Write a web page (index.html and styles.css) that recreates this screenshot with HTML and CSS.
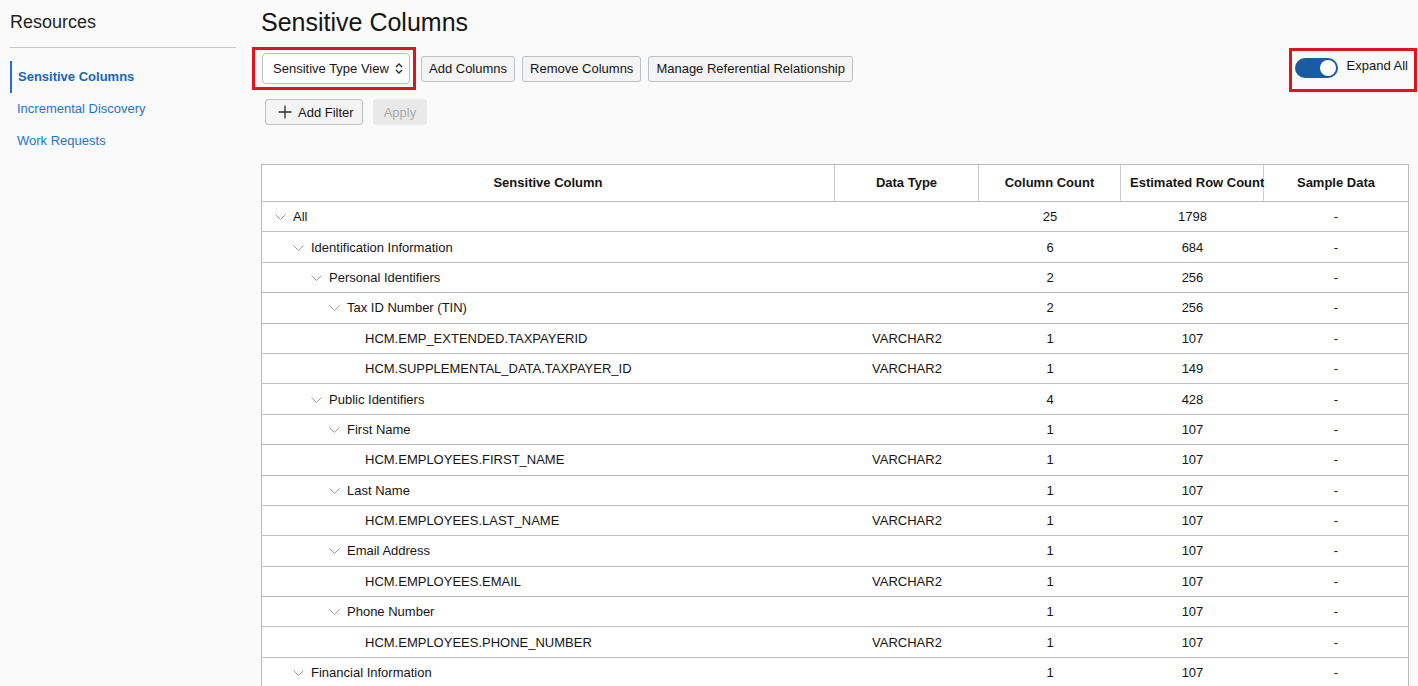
FILE: index.html
```html
<!DOCTYPE html>
<html lang="en">
<head>
<meta charset="utf-8">
<title>Sensitive Columns</title>
<link rel="stylesheet" href="styles.css">
</head>
<body>
<div class="page">
  <aside class="sidebar">
    <h2 class="side-title">Resources</h2>
    <nav class="side-nav">
      <a class="nav-item active">Sensitive Columns</a>
      <a class="nav-item">Incremental Discovery</a>
      <a class="nav-item">Work Requests</a>
    </nav>
  </aside>

  <main class="main">
    <h1 class="title">Sensitive Columns</h1>

    <div class="toolbar">
      <div class="toolbar-left">
        <div class="highlight highlight-select">
          <div class="select">
            <span>Sensitive Type View</span>
            <svg class="select-icon" width="8" height="13" viewBox="0 0 8 13"><path d="M1 5 L4 2 L7 5 M1 8 L4 11 L7 8" fill="none" stroke="#2b2b2b" stroke-width="1.3"/></svg>
          </div>
        </div>
        <button class="btn">Add Columns</button>
        <button class="btn">Remove Columns</button>
        <button class="btn">Manage Referential Relationship</button>
      </div>
      <div class="highlight highlight-toggle">
        <span class="switch"><span class="knob"></span></span>
        <span class="switch-label">Expand All</span>
      </div>
    </div>

    <div class="filter-row">
      <button class="btn btn-filter">
        <svg width="14" height="14" viewBox="0 0 14 14"><path d="M7 0.5 V13.5 M0.5 7 H13.5" stroke="#2b2b2b" stroke-width="1.3" fill="none"/></svg>
        <span>Add Filter</span>
      </button>
      <button class="btn btn-disabled">Apply</button>
    </div>

    <div class="table">
      <div class="thead">
        <div class="th">Sensitive Column</div>
        <div class="th">Data Type</div>
        <div class="th">Column Count</div>
        <div class="th">Estimated Row Count</div>
        <div class="th">Sample Data</div>
      </div>

      <div class="tr"><div class="td tree lvl0"><span class="chev"><svg width="11" height="7" viewBox="0 0 11 7"><path d="M0.5 0.5 L5.5 5.5 L10.5 0.5" fill="none" stroke="#9a9a9a" stroke-width="1"/></svg></span>All</div><div class="td"></div><div class="td">25</div><div class="td">1798</div><div class="td">-</div></div>
      <div class="tr"><div class="td tree lvl1"><span class="chev"><svg width="11" height="7" viewBox="0 0 11 7"><path d="M0.5 0.5 L5.5 5.5 L10.5 0.5" fill="none" stroke="#9a9a9a" stroke-width="1"/></svg></span>Identification Information</div><div class="td"></div><div class="td">6</div><div class="td">684</div><div class="td">-</div></div>
      <div class="tr"><div class="td tree lvl2"><span class="chev"><svg width="11" height="7" viewBox="0 0 11 7"><path d="M0.5 0.5 L5.5 5.5 L10.5 0.5" fill="none" stroke="#9a9a9a" stroke-width="1"/></svg></span>Personal Identifiers</div><div class="td"></div><div class="td">2</div><div class="td">256</div><div class="td">-</div></div>
      <div class="tr"><div class="td tree lvl3"><span class="chev"><svg width="11" height="7" viewBox="0 0 11 7"><path d="M0.5 0.5 L5.5 5.5 L10.5 0.5" fill="none" stroke="#9a9a9a" stroke-width="1"/></svg></span>Tax ID Number (TIN)</div><div class="td"></div><div class="td">2</div><div class="td">256</div><div class="td">-</div></div>
      <div class="tr"><div class="td tree lvl4"><span class="chev"></span>HCM.EMP_EXTENDED.TAXPAYERID</div><div class="td">VARCHAR2</div><div class="td">1</div><div class="td">107</div><div class="td">-</div></div>
      <div class="tr"><div class="td tree lvl4"><span class="chev"></span>HCM.SUPPLEMENTAL_DATA.TAXPAYER_ID</div><div class="td">VARCHAR2</div><div class="td">1</div><div class="td">149</div><div class="td">-</div></div>
      <div class="tr"><div class="td tree lvl2"><span class="chev"><svg width="11" height="7" viewBox="0 0 11 7"><path d="M0.5 0.5 L5.5 5.5 L10.5 0.5" fill="none" stroke="#9a9a9a" stroke-width="1"/></svg></span>Public Identifiers</div><div class="td"></div><div class="td">4</div><div class="td">428</div><div class="td">-</div></div>
      <div class="tr"><div class="td tree lvl3"><span class="chev"><svg width="11" height="7" viewBox="0 0 11 7"><path d="M0.5 0.5 L5.5 5.5 L10.5 0.5" fill="none" stroke="#9a9a9a" stroke-width="1"/></svg></span>First Name</div><div class="td"></div><div class="td">1</div><div class="td">107</div><div class="td">-</div></div>
      <div class="tr"><div class="td tree lvl4"><span class="chev"></span>HCM.EMPLOYEES.FIRST_NAME</div><div class="td">VARCHAR2</div><div class="td">1</div><div class="td">107</div><div class="td">-</div></div>
      <div class="tr"><div class="td tree lvl3"><span class="chev"><svg width="11" height="7" viewBox="0 0 11 7"><path d="M0.5 0.5 L5.5 5.5 L10.5 0.5" fill="none" stroke="#9a9a9a" stroke-width="1"/></svg></span>Last Name</div><div class="td"></div><div class="td">1</div><div class="td">107</div><div class="td">-</div></div>
      <div class="tr"><div class="td tree lvl4"><span class="chev"></span>HCM.EMPLOYEES.LAST_NAME</div><div class="td">VARCHAR2</div><div class="td">1</div><div class="td">107</div><div class="td">-</div></div>
      <div class="tr"><div class="td tree lvl3"><span class="chev"><svg width="11" height="7" viewBox="0 0 11 7"><path d="M0.5 0.5 L5.5 5.5 L10.5 0.5" fill="none" stroke="#9a9a9a" stroke-width="1"/></svg></span>Email Address</div><div class="td"></div><div class="td">1</div><div class="td">107</div><div class="td">-</div></div>
      <div class="tr"><div class="td tree lvl4"><span class="chev"></span>HCM.EMPLOYEES.EMAIL</div><div class="td">VARCHAR2</div><div class="td">1</div><div class="td">107</div><div class="td">-</div></div>
      <div class="tr"><div class="td tree lvl3"><span class="chev"><svg width="11" height="7" viewBox="0 0 11 7"><path d="M0.5 0.5 L5.5 5.5 L10.5 0.5" fill="none" stroke="#9a9a9a" stroke-width="1"/></svg></span>Phone Number</div><div class="td"></div><div class="td">1</div><div class="td">107</div><div class="td">-</div></div>
      <div class="tr"><div class="td tree lvl4"><span class="chev"></span>HCM.EMPLOYEES.PHONE_NUMBER</div><div class="td">VARCHAR2</div><div class="td">1</div><div class="td">107</div><div class="td">-</div></div>
      <div class="tr"><div class="td tree lvl1"><span class="chev"><svg width="11" height="7" viewBox="0 0 11 7"><path d="M0.5 0.5 L5.5 5.5 L10.5 0.5" fill="none" stroke="#9a9a9a" stroke-width="1"/></svg></span>Financial Information</div><div class="td"></div><div class="td">1</div><div class="td">107</div><div class="td">-</div></div>
    </div>
  </main>
</div>
</body>
</html>
```

FILE: styles.css
```css
html, body {
  margin: 0;
  padding: 0;
  height: 686px;
  overflow: hidden;
  background: #fafafa;
}

body {
  font-family: "Liberation Sans", Arial, sans-serif;
  font-size: 13px;
  color: #161513;
}

.page {
  display: flex;
  align-items: flex-start;
}

/* Sidebar */
.sidebar {
  width: 226px;
  padding-left: 10px;
  flex: none;
}

.side-title {
  margin: 0;
  padding-top: 11px;
  padding-bottom: 14px;
  font-size: 18px;
  line-height: 22px;
  font-weight: normal;
  color: #1f1f1f;
  border-bottom: 1px solid #c6c9ce;
}

.side-nav {
  display: flex;
  flex-direction: column;
  margin-top: 13px;
}

.nav-item {
  display: block;
  height: 32px;
  line-height: 32px;
  padding-left: 5px;
  border-left: 2px solid transparent;
  color: #1f74c9;
  font-size: 13px;
  cursor: pointer;
}

.nav-item.active {
  border-left-color: #1f74c9;
  padding-left: 6px;
  font-weight: bold;
  color: #1766b8;
}

/* Main */
.main {
  flex: 1;
  min-width: 0;
  padding: 8px 9px 0 25px;
}

.title {
  margin: 0;
  font-size: 25px;
  line-height: 28px;
  font-weight: normal;
  color: #161513;
}

.toolbar {
  display: flex;
  justify-content: space-between;
  align-items: flex-start;
  margin-top: 11px;
}

.toolbar-left {
  display: flex;
  align-items: center;
  gap: 7px;
}

.highlight {
  border: 3px solid #e2131d;
}

.highlight-select {
  margin-left: -9px;
  margin-right: -2px;
  padding: 3px 3px 3px 7px;
}

.select {
  box-sizing: border-box;
  width: 148px;
  height: 31px;
  display: flex;
  align-items: center;
  justify-content: space-between;
  padding: 0 6px 0 10px;
  background: #fff;
  border: 1px solid #b9bdc2;
  border-radius: 4px;
  color: #161513;
}

.btn {
  box-sizing: border-box;
  height: 26px;
  padding: 0 7px;
  font-family: "Liberation Sans", Arial, sans-serif;
  font-size: 13px;
  color: #161513;
  background: #f4f4f4;
  border: 1px solid #bdc1c6;
  border-radius: 3px;
  white-space: nowrap;
}

.highlight-toggle {
  margin-top: 1px;
  margin-right: -8px;
  height: 44px;
  box-sizing: border-box;
  display: flex;
  align-items: flex-start;
  gap: 9px;
  padding: 7px 6px 0 3px;
}

.switch {
  box-sizing: border-box;
  width: 43px;
  height: 20px;
  border-radius: 10px;
  background: #185ca3;
  display: flex;
  justify-content: flex-end;
  align-items: center;
  padding: 0 2px;
}

.knob {
  width: 16px;
  height: 16px;
  border-radius: 50%;
  background: #fff;
}

.switch-label {
  line-height: 16px;
  color: #161513;
}

.filter-row {
  display: flex;
  gap: 10px;
  margin-top: 7px;
  margin-left: 4px;
}

.btn-filter {
  display: flex;
  align-items: center;
  gap: 6px;
  padding: 0 8px 0 12px;
}

.btn-filter svg {
  display: block;
}

.btn-disabled {
  background: #e9e9e9;
  border-color: #e9e9e9;
  color: #ababab;
  padding: 0 10px;
}

/* Table */
.table {
  margin-top: 39px;
  background: #fff;
  border: 1px solid #b9bdc2;
  border-bottom: none;
}

.thead,
.tr {
  display: grid;
  grid-template-columns: 573px 144px 142px 143px 1fr;
}

.thead {
  height: 37px;
  box-sizing: border-box;
  border-bottom: 1px solid #b9bdc2;
}

.th {
  box-sizing: border-box;
  padding: 0 9px;
  line-height: 35px;
  text-align: center;
  font-weight: bold;
  white-space: nowrap;
  border-right: 1px solid #c9ccd0;
  color: #161513;
}

.th:last-child {
  border-right: none;
}

.tr {
  height: 30.4px;
  box-sizing: border-box;
  border-bottom: 1px solid #bdc0c5;
}

.td {
  display: flex;
  align-items: center;
  justify-content: center;
  white-space: nowrap;
  color: #161513;
}

.td.tree {
  justify-content: flex-start;
}

.chev {
  width: 18px;
  flex: none;
  display: flex;
  align-items: center;
  padding-top: 2px;
}

.chev svg {
  display: block;
}

.lvl0 { padding-left: 13px; }
.lvl1 { padding-left: 31px; }
.lvl2 { padding-left: 49px; }
.lvl3 { padding-left: 67px; }
.lvl4 { padding-left: 85px; }
```
